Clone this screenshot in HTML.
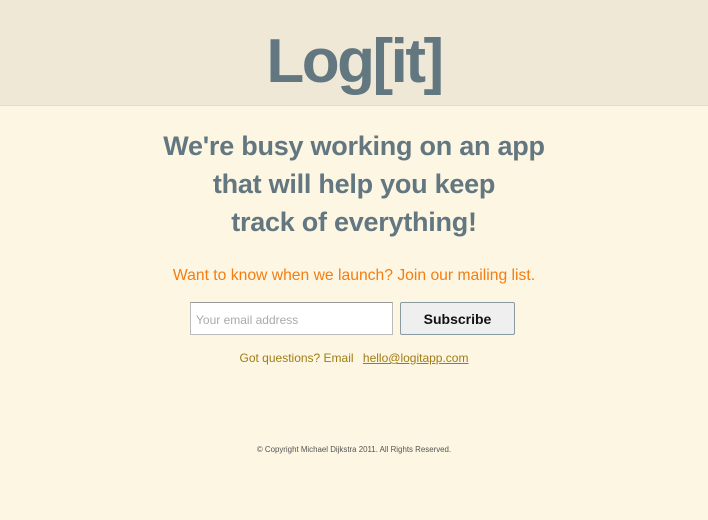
<!DOCTYPE html>
<html><head><meta charset="utf-8"><style>
*{margin:0;padding:0;box-sizing:border-box}
body{width:708px;height:520px;background:#fdf6e2;font-family:"Liberation Sans",sans-serif;position:relative;overflow:hidden}
.hd{position:absolute;left:0;top:0;width:708px;height:106px;background:#f0e8d6;border-bottom:1px solid #e2dccb}
.logo{position:absolute;left:0;width:708px;top:26px;text-align:center;font-size:62px;font-weight:bold;color:#627780;letter-spacing:-2.5px;line-height:72px}
.h{position:absolute;left:0;width:708px;text-align:center;font-size:27px;font-weight:bold;letter-spacing:-0.25px;color:#627780;line-height:38px;top:127px}
.o{position:absolute;left:0;width:708px;text-align:center;top:267px;font-size:15.7px;color:#f47d12}
.in{position:absolute;left:190px;top:302px;width:203px;height:33px;background:#fff;border:1px solid #bbb;border-top-color:#999;font-size:12px;color:#aaa;padding:10px 5px}
.bt{position:absolute;left:400px;top:302px;width:115px;height:33px;background:#efefef;border:1px solid #8a9aa2;border-radius:2px;font-size:14px;font-weight:bold;color:#111;text-align:center;line-height:33px}
.q{position:absolute;left:0;width:708px;text-align:center;top:351px;font-size:12px;color:#a07d14}
.q u{margin-left:6px}
.c{position:absolute;left:0;width:708px;text-align:center;top:445px;font-size:7.9px;color:#555}
</style></head><body>
<div class="hd"></div>
<div class="logo">Log[it]</div>
<div class="h">We're busy working on an app<br>that will help you keep<br>track of everything!</div>
<div class="o">Want to know when we launch? Join our mailing list.</div>
<div class="in">Your email address</div>
<div class="bt">Subscribe</div>
<div class="q">Got questions? Email <u>hello@logitapp.com</u></div>
<div class="c">© Copyright Michael Dijkstra 2011. All Rights Reserved.</div>
</body></html>
